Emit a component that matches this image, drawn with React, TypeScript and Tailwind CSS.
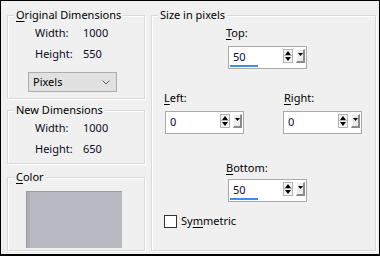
import React from "react";

const font = { fontFamily: '"Noto Sans", "Segoe UI", sans-serif' };

function U({ children }: { children: React.ReactNode }) {
  return <span className="underline underline-offset-[2px] decoration-[1px]">{children}</span>;
}

function Legend({ children }: { children: React.ReactNode }) {
  return (
    <legend className="ml-[6px] px-[2px] bg-[#f0f0f0] text-[11px] leading-[14px] text-black">
      {children}
    </legend>
  );
}

const fs =
  "border border-[#d9d9d9] shadow-[inset_1px_1px_0_#ffffff,1px_1px_0_#ffffff] min-w-0 p-0 m-0";

function Row({ label, value }: { label: string; value: string }) {
  return (
    <div className="flex h-[16px] items-center pl-[27px] text-[11px] leading-[16px] text-[#0a0a1e]">
      <span className="w-[48px]">{label}</span>
      <span>{value}</span>
    </div>
  );
}

function Up() {
  return (
    <svg width="6" height="4" viewBox="0 0 6 4" className="block">
      <path d="M3 0 L6 4 L0 4 Z" fill="#000" />
    </svg>
  );
}
function Down() {
  return (
    <svg width="6" height="4" viewBox="0 0 6 4" className="block">
      <path d="M0 0 L6 0 L3 4 Z" fill="#000" />
    </svg>
  );
}

function Spin({ value, bar }: { value: string; bar?: boolean }) {
  return (
    <div className="w-[79px] h-[23px] border border-[#a9a9a9] bg-white flex items-start">
      <div className="w-[54px] h-full flex flex-col pl-[4px] pt-[2px]">
        <span className="text-[11px] leading-[16px] text-[#0a0a32]">{value}</span>
        {bar ? <div className="-ml-[3px] w-[28px] h-[2px] bg-[#3d8ee8]" /> : null}
      </div>
      <div className="mt-[2px] w-[10px] h-[14px] flex flex-col">
        <div className="h-[7px] border border-[#b4b4b4] bg-[#f4f4f4] flex items-center justify-center">
          <Up />
        </div>
        <div className="h-[7px] border border-t-0 border-[#b4b4b4] bg-[#f4f4f4] flex items-center justify-center">
          <Down />
        </div>
      </div>
      <div className="ml-[3px] mt-[2px] w-[9px] h-[14px] bg-[#ececec] border-t border-l border-t-[#ffffff] border-l-[#ffffff] border-r-2 border-b-2 border-r-[#8a8a8a] border-b-[#8a8a8a] flex justify-center pt-[3px]">
        <svg width="5" height="3" viewBox="0 0 5 3" className="block">
          <path d="M0 0 L5 0 L2.5 3 Z" fill="#000" />
        </svg>
      </div>
    </div>
  );
}

export default function App() {
  return (
    <div
      style={font}
      className="w-[380px] h-[256px] bg-[#f0f0f0] border-t border-l border-r border-b-2 border-black pt-[7px] pl-[6px] flex gap-[6px] text-black"
    >
      <div className="w-[138px] flex flex-col">
        <fieldset className={`${fs} h-[91px]`}>
          <Legend>
            <U>O</U>riginal Dimensions
          </Legend>
          <div className="pt-[3px] flex flex-col gap-[5px]">
            <Row label="Width:" value="1000" />
            <Row label="Height:" value="550" />
          </div>
          <div className="ml-[20px] mt-[10px] w-[89px] h-[20px] border border-[#adadad] bg-[#e1e1e1] flex items-center pl-[4px] pr-[6px] justify-between">
            <span className="text-[11px] leading-[16px]">Pixels</span>
            <svg width="8" height="5" viewBox="0 0 8 5" className="block">
              <path d="M0.5 0.5 L4 4 L7.5 0.5" stroke="#606060" strokeWidth="1" fill="none" />
            </svg>
          </div>
        </fieldset>
        <fieldset className={`${fs} h-[61px] mt-[4px]`}>
          <Legend>New Dimensions</Legend>
          <div className="pt-[3px] flex flex-col gap-[5px]">
            <Row label="Width:" value="1000" />
            <Row label="Height:" value="650" />
          </div>
        </fieldset>
        <fieldset className={`${fs} h-[81px] mt-[6px]`}>
          <Legend>
            <U>C</U>olor
          </Legend>
          <div className="pt-[7px] pl-[18px]">
            <div className="w-[96px] h-[57px] bg-[#b9b9c1] border-t border-l border-[#9a9a9e] shadow-[inset_3px_0_0_#b0b0b6]" />
          </div>
        </fieldset>
      </div>
      <fieldset className={`${fs} w-[225px] h-[243px]`}>
        <Legend>Size in pixels</Legend>
        <div className="flex flex-col text-[11px] leading-[16px]">
          <div className="mt-[3px] pl-[74px]">
            <div>
              <U>T</U>op:
            </div>
            <div className="mt-[5px] ml-[2px]">
              <Spin value="50" bar />
            </div>
          </div>
          <div className="mt-[21px] flex pl-[12px]">
            <div className="w-[119px]">
              <div>
                <U>L</U>eft:
              </div>
              <div className="mt-[5px] ml-[1px]">
                <Spin value="0" />
              </div>
            </div>
            <div>
              <div className="pl-[1px]">
                <U>R</U>ight:
              </div>
              <div className="mt-[5px]">
                <Spin value="0" />
              </div>
            </div>
          </div>
          <div className="mt-[26px] pl-[74px]">
            <div>
              <U>B</U>ottom:
            </div>
            <div className="mt-[3px] ml-[2px]">
              <Spin value="50" bar />
            </div>
          </div>
          <div className="mt-[11px] pl-[12px] flex items-center gap-[4px] h-[16px]">
            <div className="w-[13px] h-[13px] border border-[#333333] bg-white" />
            <span>
              Sy<U>m</U>metric
            </span>
          </div>
        </div>
      </fieldset>
    </div>
  );
}
